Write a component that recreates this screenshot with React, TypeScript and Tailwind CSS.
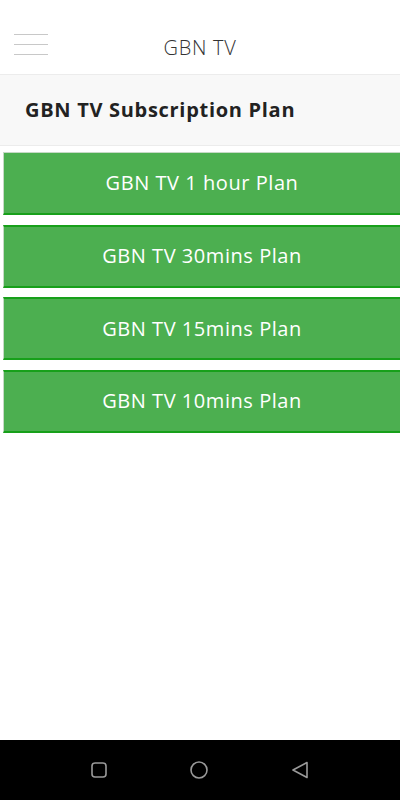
import React from 'react';

const plans = ['GBN TV 1 hour Plan', 'GBN TV 30mins Plan', 'GBN TV 15mins Plan', 'GBN TV 10mins Plan'];

export default function App() {
  return (
    <div className="w-[400px] h-[800px] flex flex-col bg-white overflow-hidden" style={{ fontFamily: '"Open Sans", "Liberation Sans", sans-serif' }}>
      {/* header */}
      <div className="h-[75px] flex items-center relative border-b border-[#ececec]">
        <div className="absolute left-[14px] top-[34px] w-[34px] flex flex-col gap-[9px]">
          <div className="h-px bg-[#c8c8c8]" />
          <div className="h-px bg-[#c8c8c8]" />
          <div className="h-px bg-[#c8c8c8]" />
        </div>
        <div className="flex-1 text-center text-[20px] font-light tracking-[0.7px] text-[#333] pt-[21px]">GBN TV</div>
      </div>

      {/* title band */}
      <div className="h-[71px] bg-[#f8f8f8] border-b border-[#ececec] flex items-center pl-[25px]">
        <span className="text-[20px] font-bold tracking-[0.7px] text-[#222]">GBN TV Subscription Plan</span>
      </div>

      {/* plans */}
      <div className="flex flex-col gap-[9.5px] pl-[3px] pt-[6px]">
        {plans.map((p, i) => (
          <button
            key={p}
            className={
              'h-[63px] bg-[#4caf50] text-white text-[20px] tracking-[0.55px] border-l border-l-[#c6d9c6] border-b-2 border-b-[#17a01a] ' +
              (i === 0 ? 'border-t border-t-[#c6d9c6]' : 'border-t-2 border-t-[#17a01a]')
            }
          >
            {p}
          </button>
        ))}
      </div>

      <div className="flex-1" />

      {/* android nav */}
      <div className="h-[60px] bg-black flex items-center justify-center gap-[83px]">
        <svg width="16" height="16" viewBox="0 0 16 16">
          <rect x="1" y="1" width="14" height="14" rx="3" fill="none" stroke="#9a9a9a" strokeWidth="1.6" />
        </svg>
        <svg width="18" height="18" viewBox="0 0 18 18">
          <circle cx="9" cy="9" r="8" fill="none" stroke="#9a9a9a" strokeWidth="1.6" />
        </svg>
        <svg width="18" height="18" viewBox="0 0 18 18">
          <path d="M16 1.5 L2 9 L16 16.5 Z" fill="none" stroke="#9a9a9a" strokeWidth="1.6" strokeLinejoin="round" />
        </svg>
      </div>
    </div>
  );
}
